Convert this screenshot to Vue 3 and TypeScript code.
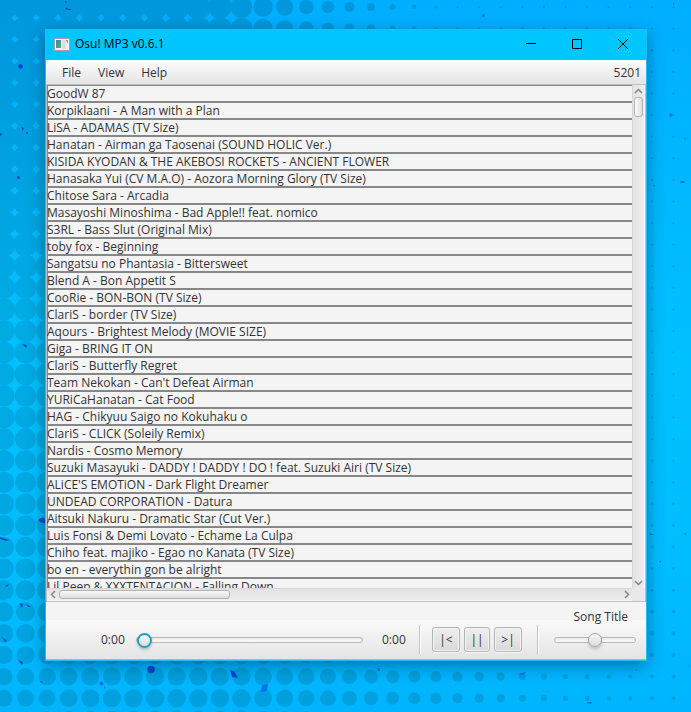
<script setup lang="ts">
import { ref } from 'vue'

interface Dot {
  x: number
  y: number
  r: number
}

type Stop = [number, number]

const songs: string[] = [
  'GoodW 87',
  'Korpiklaani - A Man with a Plan',
  'LiSA - ADAMAS (TV Size)',
  'Hanatan - Airman ga Taosenai (SOUND HOLIC Ver.)',
  'KISIDA KYODAN & THE AKEBOSI ROCKETS - ANCIENT FLOWER',
  'Hanasaka Yui (CV M.A.O) - Aozora Morning Glory (TV Size)',
  'Chitose Sara - Arcadia',
  'Masayoshi Minoshima - Bad Apple!! feat. nomico',
  'S3RL - Bass Slut (Original Mix)',
  'toby fox - Beginning',
  'Sangatsu no Phantasia - Bittersweet',
  'Blend A - Bon Appetit S',
  'CooRie - BON-BON (TV Size)',
  'ClariS - border (TV Size)',
  'Aqours - Brightest Melody (MOVIE SIZE)',
  'Giga - BRING IT ON',
  'ClariS - Butterfly Regret',
  "Team Nekokan - Can't Defeat Airman",
  'YURiCaHanatan - Cat Food',
  'HAG - Chikyuu Saigo no Kokuhaku o',
  'ClariS - CLICK (Soleily Remix)',
  'Nardis - Cosmo Memory',
  'Suzuki Masayuki - DADDY ! DADDY ! DO ! feat. Suzuki Airi (TV Size)',
  "ALiCE'S EMOTiON - Dark Flight Dreamer",
  'UNDEAD CORPORATION - Datura',
  'Aitsuki Nakuru - Dramatic Star (Cut Ver.)',
  'Luis Fonsi & Demi Lovato - Echame La Culpa',
  'Chiho feat. majiko - Egao no Kanata (TV Size)',
  'bo en - everythin gon be alright',
  'Lil Peep & XXXTENTACION - Falling Down',
]

const menus: string[] = ['File', 'View', 'Help']
const position = ref<number>(0)
const volume = ref<number>(50)

// Halftone wallpaper: dot radius follows a curve along each edge of the screen.
const topEdge: Stop[] = [[0, 13.1], [190, 12.6], [220, 11.8], [241, 10.9], [263, 9.8], [285, 8.7], [306, 7.3], [328, 6.2], [350, 5], [371, 4], [392, 3], [414, 2.2], [436, 1.6], [460, 1.2], [691, 1.2]]
const bottomEdge: Stop[] = [[0, 8.4], [130, 9.3], [241, 9.2], [306, 8.3], [371, 7], [436, 5.6], [479, 4.7], [522, 3.5], [565, 2.7], [610, 2.3], [691, 2]]
const leftEdge: Stop[] = [[0, 13.1], [150, 12.8], [230, 12.3], [285, 11.2], [400, 10.8], [591, 10], [677, 8.7], [712, 8.2]]

function sample(stops: Stop[], at: number): number {
  for (let i = 1; i < stops.length; i++) {
    const [x0, r0] = stops[i - 1]
    const [x1, r1] = stops[i]
    if (at <= x1) return r0 + ((r1 - r0) * (at - x0)) / (x1 - x0)
  }
  return stops[stops.length - 1][1]
}

function radius(x: number, y: number): number {
  if (x < 60) return sample(leftEdge, y)
  if (y > 600) return sample(bottomEdge, x)
  if (y > 500 && x > 640) return 1.5
  return sample(topEdge, x)
}

const dots: Dot[] = []
for (let row = 0; row < 34; row++) {
  for (let col = 0; col < 33; col++) {
    const x = 3.9 + col * 21.6
    const y = 7 + row * 21.6
    dots.push({ x, y, r: radius(x, y) })
  }
}
</script>

<template>
  <div class="desktop">
    <svg class="wallpaper" viewBox="0 0 691 712" preserveAspectRatio="xMidYMid slice" aria-hidden="true">
      <defs>
        <linearGradient id="sky" x1="0" y1="0" x2="0" y2="1">
          <stop offset="0" stop-color="#00aeff" />
          <stop offset="0.5" stop-color="#00c1ff" />
          <stop offset="0.8" stop-color="#00bdff" />
          <stop offset="1" stop-color="#00b4ff" />
        </linearGradient>
        <linearGradient id="halftone" gradientUnits="userSpaceOnUse" x1="0" y1="0" x2="0" y2="712">
          <stop offset="0" stop-color="#0097dc" />
          <stop offset="0.45" stop-color="#00abe4" />
          <stop offset="0.75" stop-color="#00a8e2" />
          <stop offset="1" stop-color="#009fdd" />
        </linearGradient>
      </defs>
      <rect width="691" height="712" fill="url(#sky)" />
      <g fill="url(#halftone)">
        <circle v-for="(d, i) in dots" :key="i" :cx="d.x" :cy="d.y" :r="d.r" />
      </g>
      <g fill="#0046cf">
        <circle cx="20.500" cy="66.500" r="2.200" />
        <path d="M65 1l1.500 0 -.5 3zM65 8l6 1 0 1-5-.5zM21 127l3 1-1 3z" />
        <circle cx="18.500" cy="177.500" r="1.500" />
        <circle cx="0.500" cy="134.500" r="1.300" />
        <circle cx="27" cy="133" r="1" />
        <path d="M22 344l5 1-1 3zM0 537l9 3-2 1-7-2zM38 520q4-4 7-1v4q-4 1-7-3z" />
        <path d="M5 586l4-2-2 3zM19 603l4 1-1 4zM26 604l5 3-3 0zM2 637l5 4-2 1zM18 660l5 2-1 3z" />
        <circle cx="151" cy="669.500" r="3.700" />
        <path d="M40 681l3 1-2 1zM230 670l4 1 4 7-6-1z" />
      </g>
      <g fill="#0070f4">
        <circle cx="101.500" cy="683.500" r="2" />
        <path d="M104 686l2 3-2-1zM262 685l6-1-1 7-6 1zM377 668h3v3h-2zM587 702l5 0-1 2-4-1zM518 674l8-2-3 3zM635 670l2-1 0 2zM467 687l3-1zM688 663l2 4-1 0zM673 3h1v2h-1zM595 9l1 3z" />
        <circle cx="483.500" cy="15.500" r="1.500" />
        <circle cx="671" cy="115" r="1.700" />
        <path d="M680 181l4 0 1 2-4 0zM653 185l2 0-1 2zM684 138l2 0-1 2zM649 533l6 2-5 0zM684 533l3 1-2 1zM659 561l2 0 0 2z" />
      </g>
    </svg>

    <main class="window">
      <header class="titlebar">
        <svg class="app-icon" viewBox="0 0 16 13" width="16" height="13" aria-hidden="true">
          <defs>
            <linearGradient id="icon-screen" x1="0" y1="0" x2="1" y2="1">
              <stop offset="0" stop-color="#4f7db0" />
              <stop offset="1" stop-color="#5da868" />
            </linearGradient>
          </defs>
          <rect x="0.500" y="0.500" width="15" height="12" fill="#f4f4f4" stroke="#a0a0a0" />
          <rect x="2" y="2" width="5" height="8" fill="url(#icon-screen)" />
          <rect x="8" y="2" width="4" height="9" fill="#dedede" />
          <path d="M12 2h2v4z" fill="#6b9c8c" />
        </svg>
        <h1 class="title">Osu! MP3 v0.6.1</h1>
        <button class="caption" type="button" aria-label="Minimize">
          <svg viewBox="0 0 12 12" width="12" height="12"><path d="M1 5.500h10" /></svg>
        </button>
        <button class="caption" type="button" aria-label="Maximize">
          <svg viewBox="0 0 12 12" width="12" height="12"><path d="M1.500 1.500h9v9h-9z" /></svg>
        </button>
        <button class="caption" type="button" aria-label="Close">
          <svg viewBox="0 0 12 12" width="12" height="12"><path d="M1 1l10 10M11 1L1 11" /></svg>
        </button>
      </header>

      <nav class="menubar">
        <button v-for="menu in menus" :key="menu" class="menu" type="button">{{ menu }}</button>
        <span class="count">5201</span>
      </nav>

      <section class="pane">
        <ul class="songs">
          <li v-for="song in songs" :key="song" class="song">{{ song }}</li>
        </ul>
        <div class="bar vertical">
          <button class="arrow" type="button" aria-label="Scroll up">
            <svg viewBox="0 0 9 6" width="9" height="6"><path d="M1 5l3.500-3.500L8 5" /></svg>
          </button>
          <div class="thumb"></div>
          <button class="arrow end" type="button" aria-label="Scroll down">
            <svg viewBox="0 0 9 6" width="9" height="6"><path d="M1 1l3.500 3.500L8 1" /></svg>
          </button>
        </div>
        <div class="bar horizontal">
          <button class="arrow" type="button" aria-label="Scroll left">
            <svg viewBox="0 0 6 9" width="6" height="9"><path d="M5 1L1.500 4.500 5 8" /></svg>
          </button>
          <div class="thumb"></div>
          <button class="arrow end" type="button" aria-label="Scroll right">
            <svg viewBox="0 0 6 9" width="6" height="9"><path d="M1 1l3.500 3.500L1 8" /></svg>
          </button>
        </div>
        <div class="corner"></div>
      </section>

      <p class="song-title">Song Title</p>

      <footer class="toolbar">
        <span class="time">0:00</span>
        <input v-model.number="position" class="slider seek" type="range" min="0" max="100" aria-label="Position" />
        <span class="time">0:00</span>
        <span class="separator"></span>
        <div class="buttons">
          <button class="control" type="button" aria-label="Previous">|&lt;</button>
          <button class="control narrow" type="button" aria-label="Pause">||</button>
          <button class="control" type="button" aria-label="Next">&gt;|</button>
        </div>
        <span class="separator"></span>
        <input v-model.number="volume" class="slider volume" type="range" min="0" max="100" aria-label="Volume" />
      </footer>
    </main>
  </div>
</template>

<style>
body {
  margin: 0;
  background: #00b8ff;
}
</style>

<style scoped>
.desktop {
  position: relative;
  box-sizing: border-box;
  display: flex;
  height: 100vh;
  padding: 29px 44px 51px 45px;
  overflow: hidden;
  font-family: "Open Sans", "Noto Sans", sans-serif;
  font-size: 12px;
  line-height: 17px;
  color: #333;
}

.wallpaper {
  position: absolute;
  inset: 0;
  width: 100%;
  height: 100%;
}

button {
  margin: 0;
  padding: 0;
  border: 0;
  background: none;
  font: inherit;
  color: inherit;
}

.window {
  position: relative;
  display: flex;
  flex: 1;
  flex-direction: column;
  min-width: 0;
  border: 1px solid #1fbdf2;
  background: #f4f4f4;
  box-shadow: 0 5px 16px rgba(0, 30, 60, 0.42);
}

.titlebar {
  display: flex;
  align-items: center;
  box-sizing: border-box;
  height: 30px;
  padding: 0 0 2px 8px;
  background: #00c6ff;
  color: #000;
}

.app-icon {
  margin-right: 5px;
}

.title {
  flex: 1;
  margin: 0;
  font-size: 12px;
  font-weight: 400;
  line-height: 18px;
}

.caption {
  display: flex;
  align-items: center;
  justify-content: center;
  width: 46px;
  height: 28px;
}

.caption svg {
  fill: none;
  stroke: #000;
  stroke-width: 1;
}

.menubar {
  display: flex;
  align-items: center;
  height: 24px;
  padding: 0 5px 0 8px;
  background: linear-gradient(#fdfdfd, #e4e4e4);
}

.menu {
  padding: 0 8px;
  margin-right: 1px;
}

.count {
  margin-left: auto;
}

.pane {
  display: grid;
  grid-template-columns: 1fr 13px;
  grid-template-rows: 1fr 13px;
  flex: 1;
  min-height: 0;
  border: 1px solid #c0c0c0;
}

.songs {
  min-width: 0;
  min-height: 0;
  margin: 0;
  padding: 0;
  overflow: hidden;
  list-style: none;
}

.song {
  height: 17px;
  white-space: nowrap;
  box-shadow: inset 1px 0 #878787, inset 0 1px #878787, inset 0 -1px #878787;
}

.bar {
  display: flex;
  align-items: center;
  box-sizing: border-box;
}

.vertical {
  flex-direction: column;
  border-left: 1px solid #d8d8d8;
  border-right: 1px solid #f8f8f8;
  background: linear-gradient(90deg, #e2e2e2, #ededed);
}

.horizontal {
  border-top: 1px solid #d8d8d8;
  border-bottom: 1px solid #f8f8f8;
  background: linear-gradient(#e2e2e2, #ededed);
}

.corner {
  background: #e9e9e9;
}

.arrow {
  display: flex;
  align-items: center;
  justify-content: center;
  width: 11px;
  height: 11px;
}

.arrow.end {
  margin-top: auto;
}

.horizontal .arrow.end {
  margin-top: 0;
  margin-left: auto;
}

.arrow svg {
  fill: none;
  stroke: #858585;
  stroke-width: 1.500;
}

.thumb {
  box-sizing: border-box;
  border: 1px solid #b2b2b2;
  border-radius: 3px;
}

.vertical .thumb {
  width: 9px;
  height: 20px;
  margin-top: 1px;
  background: linear-gradient(90deg, #fafafa, #dedede);
}

.horizontal .thumb {
  width: 171px;
  height: 9px;
  margin-left: 1px;
  background: linear-gradient(#fafafa, #dedede);
}

.song-title {
  position: relative;
  z-index: 1;
  height: 12px;
  margin: 0;
  padding: 6px 18px 0 0;
  text-align: right;
}

.toolbar {
  display: flex;
  align-items: center;
  height: 39px;
  padding: 0 10px 0 55px;
  border-bottom: 1px solid #b5b5b5;
  background: linear-gradient(#fafafa, #e4e4e4);
}

.time {
  width: 22px;
}

.separator {
  width: 1px;
  height: 30px;
  margin: 0 11px 0 15px;
  border-left: 1px solid #c4c4c4;
  background: #fff;
}

.buttons {
  display: flex;
  gap: 4px;
}

.control {
  box-sizing: border-box;
  width: 28px;
  height: 25px;
  border: 1px solid #b4b4b4;
  border-radius: 3px;
  background: linear-gradient(#efefef, #d9d9d9);
  box-shadow: inset 0 0 0 1px #f3f3f3, 0 1px 0 #f6f6f6;
}

.control.narrow {
  width: 26px;
}

.slider {
  height: 16px;
  margin: 0;
  appearance: none;
  background: none;
  outline: none;
}

.seek {
  flex: 1;
  min-width: 0;
  margin: 0 19px 0 13px;
}

.volume {
  width: 82px;
  margin-left: 4px;
}

.slider::-webkit-slider-runnable-track {
  box-sizing: border-box;
  height: 6px;
  border: 1px solid #b8b8b8;
  border-radius: 3px;
  background: linear-gradient(#e9e9e9, #fbfbfb);
}

.slider::-webkit-slider-thumb {
  box-sizing: border-box;
  width: 14px;
  height: 14px;
  margin-top: -5px;
  appearance: none;
  border: 1px solid #a6a6a6;
  border-radius: 50%;
  background: linear-gradient(#f6f6f6, #dcdcdc);
  box-shadow: 0 2px 3px rgba(0, 0, 0, 0.2);
}

.seek::-webkit-slider-thumb {
  width: 15px;
  height: 15px;
  border: 2px solid #1d9fcb;
}
</style>
